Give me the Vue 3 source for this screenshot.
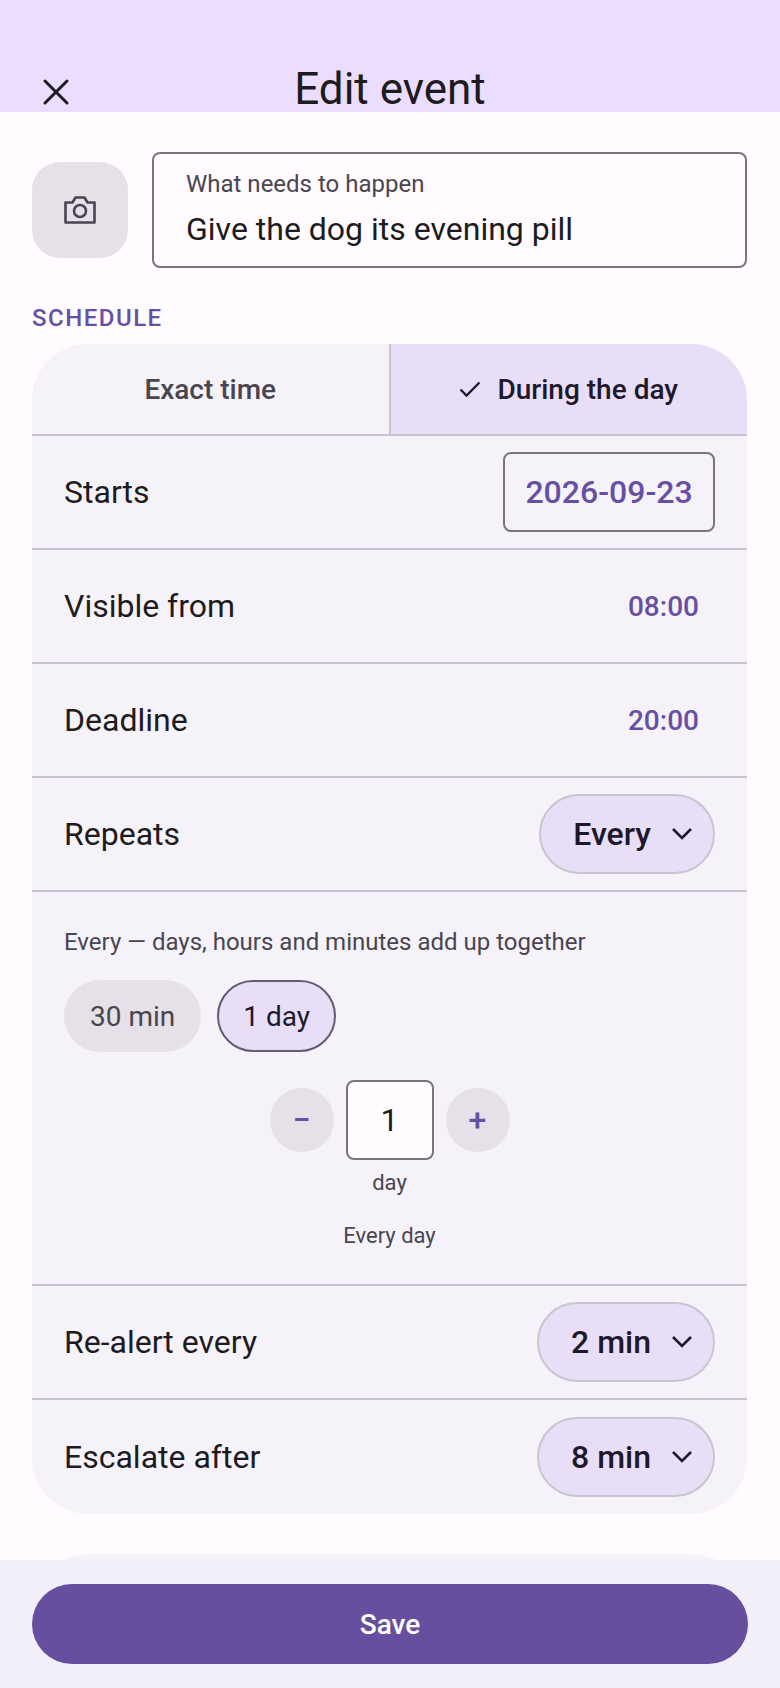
<template>
  <div class="screen">
    <header class="topbar">
      <button class="close" aria-label="Close">
        <svg width="28" height="28" viewBox="0 0 28 28"><path d="M3 3 L25 25 M25 3 L3 25" fill="none" stroke="#1d1b20" stroke-width="3" stroke-linecap="round" /></svg>
      </button>
      <h1>Edit event</h1>
    </header>

    <main class="content">
      <div class="title-row">
        <button class="photo" aria-label="Add photo">
          <svg width="32" height="28" viewBox="0 0 32 28"><path d="M1.5 26.5 V6.5 H8.5 L11.5 1.5 H20.5 L23.5 6.5 H30.5 V26.5 Z" fill="none" stroke="#49454f" stroke-width="2.6" stroke-linejoin="round" /><circle cx="16" cy="15" r="6" fill="none" stroke="#49454f" stroke-width="2.6" /></svg>
        </button>
        <label class="name-field">
          <span>What needs to happen</span>
          <input v-model="name" />
        </label>
      </div>

      <div class="section-title">SCHEDULE</div>
      <section class="card">
        <div class="tabs">
          <button class="tab">Exact time</button>
          <button class="tab active">
            <svg width="22" height="16" viewBox="0 0 22 16"><path d="M1.5 8.5 L7.5 14.5 L20.5 1.5" fill="none" stroke="#1d192b" stroke-width="2.4" /></svg>
            During the day
          </button>
        </div>

        <div class="row">
          <span>Starts</span>
          <div class="date-field">2026-09-23</div>
        </div>
        <div class="row" v-for="t in times" :key="t.label">
          <span>{{ t.label }}</span>
          <button class="time-btn">{{ t.value }}</button>
        </div>
        <div class="row">
          <span>Repeats</span>
          <button class="pill every">Every <svg class="chev" width="22" height="14" viewBox="0 0 22 14"><path d="M2 2 L11 11 L20 2" fill="none" stroke="#1d192b" stroke-width="2.6" /></svg></button>
        </div>

        <div class="repeat-box">
          <p class="hint">Every — days, hours and minutes add up together</p>
          <div class="chips">
            <button class="chip">30 min</button>
            <button class="chip selected">1 day</button>
          </div>
          <div class="stepper">
            <button class="round">−</button>
            <input class="count" value="1" />
            <button class="round">+</button>
          </div>
          <div class="unit">day</div>
          <div class="summary">Every day</div>
        </div>

        <div class="row" v-for="p in pills" :key="p.label">
          <span>{{ p.label }}</span>
          <button class="pill">{{ p.value }} <svg class="chev" width="22" height="14" viewBox="0 0 22 14"><path d="M2 2 L11 11 L20 2" fill="none" stroke="#1d192b" stroke-width="2.6" /></svg></button>
        </div>
      </section>

      <section class="card next-card"></section>
    </main>

    <footer class="footer">
      <button class="save">Save</button>
    </footer>
  </div>
</template>

<script setup>
import { ref } from 'vue'

const name = ref('Give the dog its evening pill')

const times = [
  { label: 'Visible from', value: '08:00' },
  { label: 'Deadline', value: '20:00' },
]

const pills = [
  { label: 'Re-alert every', value: '2 min' },
  { label: 'Escalate after', value: '8 min' },
]
</script>

<style>
body { margin: 0; }
</style>

<style scoped>
.screen {
  width: 780px;
  height: 1688px;
  display: flex;
  flex-direction: column;
  overflow: hidden;
  background: #fffbff;
  color: #1d1b20;
  font-family: Roboto, "Noto Sans", sans-serif;
}
button {
  font-family: inherit;
  border: 0;
  padding: 0;
  background: none;
  color: inherit;
}
.topbar {
  height: 112px;
  flex: none;
  background: #eaddff;
  display: flex;
  align-items: flex-end;
  justify-content: center;
  position: relative;
  overflow: hidden;
}
.topbar h1 {
  margin: 0 0 -3px;
  font-size: 44px;
  line-height: 52px;
  font-weight: 400;
}
.close {
  position: absolute;
  left: 42px;
  top: 78px;
  width: 28px;
  height: 28px;
}
.content {
  flex: 1;
  min-height: 0;
  overflow: hidden;
  padding: 40px 33px 0 32px;
}
.title-row {
  display: flex;
  align-items: center;
  gap: 24px;
}
.photo {
  width: 96px;
  height: 96px;
  flex: none;
  border-radius: 28px;
  background: #e6e0e9;
  display: flex;
  align-items: center;
  justify-content: center;
}
.name-field {
  flex: 1;
  height: 116px;
  box-sizing: border-box;
  border: 2px solid #79747e;
  border-radius: 8px;
  padding: 14px 32px 0;
  display: flex;
  flex-direction: column;
}
.name-field span {
  font-size: 24px;
  line-height: 32px;
  color: #49454f;
}
.name-field input {
  border: 0;
  outline: 0;
  background: none;
  padding: 0;
  margin-top: 7px;
  font-family: inherit;
  font-size: 32px;
  line-height: 44px;
  color: #1d1b20;
}
.section-title {
  margin-top: 34px;
  font-size: 24px;
  line-height: 32px;
  letter-spacing: 1.5px;
  font-weight: 500;
  color: #6750a4;
}
.card {
  margin-top: 10px;
  background: #f5f3f9;
  border-radius: 56px;
  overflow: hidden;
}
.tabs {
  display: flex;
  height: 92px;
  box-sizing: border-box;
  border-bottom: 2px solid #cac4d0;
}
.tab {
  flex: 1;
  font-size: 28px;
  font-weight: 500;
  color: #49454f;
  display: flex;
  align-items: center;
  justify-content: center;
  gap: 16px;
}
.tab.active {
  background: #e8def8;
  color: #1d192b;
  border-left: 2px solid #cac4d0;
}
.row {
  height: 114px;
  box-sizing: border-box;
  border-bottom: 2px solid #cac4d0;
  padding: 0 32px;
  display: flex;
  align-items: center;
  justify-content: space-between;
  font-size: 32px;
}
.row:last-child {
  border-bottom: 0;
}
.date-field {
  width: 212px;
  height: 80px;
  box-sizing: border-box;
  border: 2px solid #79747e;
  border-radius: 8px;
  display: flex;
  align-items: center;
  justify-content: center;
  font-weight: 500;
  color: #6750a4;
}
.time-btn {
  font-size: 28px;
  font-weight: 500;
  color: #6750a4;
  padding-right: 16px;
}
.pill {
  height: 80px;
  box-sizing: border-box;
  padding: 0 20px 0 32px;
  border: 2px solid #cac4d0;
  border-radius: 40px;
  background: #e8def8;
  color: #1d192b;
  font-size: 32px;
  font-weight: 500;
  display: flex;
  align-items: center;
  gap: 20px;
}
.repeat-box {
  height: 394px;
  box-sizing: border-box;
  border-bottom: 2px solid #cac4d0;
  padding: 32px 32px 0;
}
.hint {
  margin: 0;
  font-size: 24px;
  line-height: 36px;
  color: #49454f;
}
.chips {
  display: flex;
  gap: 16px;
  margin-top: 20px;
}
.chip {
  height: 72px;
  box-sizing: border-box;
  padding: 0 26px;
  border-radius: 36px;
  background: #e6e0e9;
  color: #49454f;
  font-size: 28px;
}
.chip.selected {
  background: #e8def8;
  border: 2px solid #625b71;
  color: #1d192b;
  padding: 0 24px;
}
.stepper {
  display: flex;
  justify-content: center;
  align-items: center;
  gap: 12px;
  margin-top: 28px;
}
.round {
  width: 64px;
  height: 64px;
  border-radius: 50%;
  background: #e6e0e9;
  color: #6750a4;
  font-size: 32px;
  font-weight: 500;
}
.count {
  width: 88px;
  height: 80px;
  box-sizing: border-box;
  border: 2px solid #79747e;
  border-radius: 8px;
  background: #fffbff;
  text-align: center;
  font-family: inherit;
  font-size: 32px;
  color: #1d1b20;
  outline: 0;
  padding: 0;
}
.unit, .summary {
  text-align: center;
  color: #49454f;
  font-size: 22px;
  line-height: 32px;
}
.unit { margin-top: 7px; }
.summary { margin-top: 21px; }
.next-card {
  margin-top: 40px;
  height: 120px;
  background: #f5f3f9;
}
.footer {
  height: 128px;
  flex: none;
  box-sizing: border-box;
  background: #f3eff8;
  padding: 24px 32px;
  position: relative;
}
.save {
  display: block;
  width: 100%;
  height: 80px;
  border-radius: 40px;
  background: #674fa0;
  color: #fff;
  font-size: 28px;
  font-weight: 500;
}
</style>
